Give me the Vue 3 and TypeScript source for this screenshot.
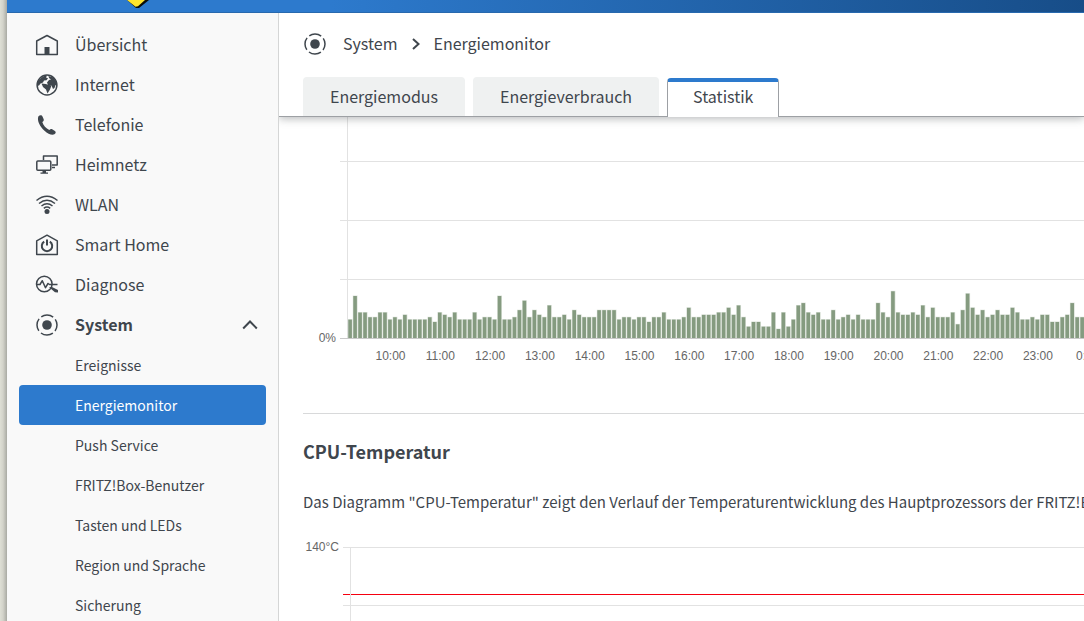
<script setup lang="ts">
interface NavItem {
  id: string
  label: string
}

const navItems: NavItem[] = [
  { id: 'home', label: 'Übersicht' },
  { id: 'globe', label: 'Internet' },
  { id: 'phone', label: 'Telefonie' },
  { id: 'network', label: 'Heimnetz' },
  { id: 'wifi', label: 'WLAN' },
  { id: 'smart', label: 'Smart Home' },
  { id: 'diagnose', label: 'Diagnose' },
]

const systemPages: string[] = [
  'Ereignisse',
  'Energiemonitor',
  'Push Service',
  'FRITZ!Box-Benutzer',
  'Tasten und LEDs',
  'Region und Sprache',
  'Sicherung',
]
const activePage = 'Energiemonitor'

const tabs: string[] = ['Energiemodus', 'Energieverbrauch', 'Statistik']
const activeTab = 'Statistik'

// CPU load in percent, one sample every six minutes
const load: number[] = [
  8, 18, 11, 11, 9, 9, 11, 11, 8, 9, 8, 10, 8, 8, 8, 8, 9, 7, 11, 10, 9, 11, 8, 8, 8, 11, 8, 9, 9, 8, 18,
  8, 8, 9, 12, 16, 9, 12, 10, 9, 14, 9, 9, 10, 8, 12, 10, 9, 9, 9, 12, 12, 12, 12, 8, 9, 9, 8, 9, 9, 7, 9, 9, 11,
  8, 8, 8, 9, 13, 9, 9, 10, 10, 10, 11, 11, 13, 10, 14, 9, 5, 7, 7, 5, 5, 11, 4, 11, 5, 8, 14, 15, 11, 10, 11,
  8, 8, 12, 8, 9, 10, 8, 10, 8, 8, 8, 15, 11, 9, 20, 11, 10, 10, 11, 10, 14, 9, 13, 9, 9, 9, 11, 6, 12, 19, 13,
  10, 12, 9, 10, 12, 10, 10, 13, 11, 8, 8, 9, 8, 10, 10, 7, 7, 9, 10, 15, 9, 9, 9, 10,
]

const hourWidth = 49.8
const baseline = 221
const bars = load.map((value, i) => {
  const height = value * 2.36
  return { x: 45.3 + (i * hourWidth) / 10, y: baseline - height, height }
})
const hours = Array.from({ length: 15 }, (_, i) => ({
  x: 87.5 + i * hourWidth,
  label: `${(10 + i) % 24}:00`,
}))
const gridLines: number[] = [44, 103, 162]
</script>

<template>
  <div class="desktop">
    <div class="page">
      <header class="topbar">
        <svg class="logo" width="30" height="9" viewBox="0 0 30 9" aria-hidden="true">
          <path d="M0 0H22L12 8H9z" fill="#0b0d08" />
          <path d="M0 0H18L11 6.300 8.500 6.800z" fill="#ffe52c" />
        </svg>
      </header>

      <div class="body">
        <nav class="sidebar" aria-label="Hauptmenü">
          <a v-for="item in navItems" :key="item.id" class="nav-item" href="#">
            <svg class="icon" width="24" height="24" viewBox="0 0 24 24" aria-hidden="true">
              <g v-if="item.id === 'home'">
                <path class="line" d="M1.700 21.500V8L12 2.500 22.300 8v13.500z" />
                <path class="solid" d="M9.500 14h5v7.500h-5z" />
              </g>
              <g v-else-if="item.id === 'globe'">
                <circle class="line" cx="12" cy="12" r="9.900" />
                <path class="solid" d="M3 8l3-3 3-2 3-.5-1 2 2 .8-1.500 2-2.500.3-1 2-2.500 1-1.500 2-2 .5z" />
                <path class="solid" d="M13.500 3l5 1.500 3 4.500.5 4-1.500-1-1 3-1.500 1-1.500-3.500-3.500-.5-1-2.500 2-2.500 2-.5-2-1.500z" />
                <path class="solid" d="M6.500 10.500l4 .5 6 1.500-1.500 4-2.500 4-1.500-4-3-2.500z" />
              </g>
              <path
                v-else-if="item.id === 'phone'"
                class="solid"
                d="M3.300 3.400C5 1.800 6.800 2 7.600 3.700l1.100 2.600c.4 1.200-.2 2-1.400 2.800 1 3.300 3.700 6.400 7 8 1-1 1.800-1.400 2.900-.8l2.700 1.600c1.300 1 1 2.400-.5 3.400-2.400 1.300-6.400-.4-9.900-3.600C5.200 14 1.800 7.600 3.300 3.400z"
              />
              <g v-else-if="item.id === 'network'">
                <path class="line" d="M8.500 7V3h13.700v9H17M17 14.500h3" />
                <rect class="line" x="1.800" y="8" width="14" height="9.200" rx="1" />
                <path class="solid" d="M7.500 17.500h3.500v2h2v1.200H5.500v-1.200h2z" />
              </g>
              <g v-else-if="item.id === 'wifi'">
                <path class="line" d="M1.500 7.500q10.500-8.500 21 0M4 10.500q8-6.500 16 0M6.500 13q5.500-4.500 11 0M8.800 15.400q3.200-2.600 6.400 0" />
                <circle class="solid" cx="12" cy="18.500" r="2.500" />
              </g>
              <g v-else-if="item.id === 'smart'">
                <path class="line" d="M1.700 21.500V7.800L12 2.200l10.300 5.600v13.700z" />
                <path class="line thick" d="M9.200 8.600a5.200 5.200 0 1 0 5.600 0M12 6.500v6" />
              </g>
              <g v-else>
                <circle class="line" cx="9.300" cy="11" r="7.800" />
                <path class="line" d="M2 11.500h3l2.300-3.800 3.200 7 2.500-4.200 1.500 1h8" />
                <path class="solid" d="M14 14.300l3-.3 6 3v2.500l-3-.3z" />
              </g>
            </svg>
            <span class="nav-label">{{ item.label }}</span>
          </a>

          <button class="nav-item nav-group" type="button" aria-expanded="true">
            <svg class="icon" width="24" height="24" viewBox="0 0 24 24" aria-hidden="true">
              <circle class="solid" cx="12" cy="12" r="4.800" />
              <circle class="line ring" cx="12" cy="12" r="10" />
            </svg>
            <span class="nav-label">System</span>
            <svg class="chevron" width="16" height="12" viewBox="0 0 16 12" aria-hidden="true">
              <path d="M1.200 9.500L8 2.500l6.800 7" />
            </svg>
          </button>

          <a
            v-for="page in systemPages"
            :key="page"
            class="sub-item"
            :class="{ active: page === activePage }"
            href="#"
          >{{ page }}</a>
        </nav>

        <main class="content">
          <div class="head">
            <div class="crumbs">
              <svg class="icon" width="24" height="24" viewBox="0 0 24 24" aria-hidden="true">
                <circle class="solid" cx="12" cy="12" r="4.800" />
                <circle class="line ring" cx="12" cy="12" r="10" />
              </svg>
              <a class="nav-label" href="#">System</a>
              <svg class="separator" width="8" height="12" viewBox="0 0 8 12" aria-hidden="true">
                <path d="M1 1l5.500 5L1 11" />
              </svg>
              <span class="nav-label">Energiemonitor</span>
            </div>
            <div class="tabs" role="tablist">
              <button
                v-for="tab in tabs"
                :key="tab"
                class="tab"
                :class="{ selected: tab === activeTab }"
                type="button"
                role="tab"
                :aria-selected="tab === activeTab"
              >{{ tab }}</button>
            </div>
          </div>

          <div class="scroll">
            <svg class="chart" height="296" role="img" aria-label="CPU-Auslastung">
              <line v-for="y in gridLines" :key="y" class="grid" x1="37" x2="100%" :y1="y + 0.5" :y2="y + 0.5" />
              <line class="grid" x1="44.5" x2="44.5" y1="0" y2="221" />
              <rect v-for="(bar, i) in bars" :key="i" class="halo" :x="bar.x - 0.5" :y="bar.y" width="4.800" :height="bar.height" />
              <rect v-for="(bar, i) in bars" :key="i" class="bar" :x="bar.x" :y="bar.y + 0.5" width="3.600" :height="bar.height" />
              <line class="axis" x1="37" x2="100%" y1="221.5" y2="221.5" />
              <text x="33" y="225" text-anchor="end">0%</text>
              <text v-for="hour in hours" :key="hour.x" :x="hour.x" y="243" text-anchor="middle">{{ hour.label }}</text>
            </svg>

            <section class="section">
              <h2>CPU-Temperatur</h2>
              <p>Das Diagramm "CPU-Temperatur" zeigt den Verlauf der Temperaturentwicklung des Hauptprozessors der FRITZ!Box.</p>
            </section>

            <svg class="chart" height="240" role="img" aria-label="CPU-Temperatur">
              <line class="grid" x1="40" x2="100%" y1="17.5" y2="17.5" />
              <line class="grid" x1="40" x2="100%" y1="75.5" y2="75.5" />
              <line class="limit" x1="40" x2="100%" y1="64.5" y2="64.5" />
              <line class="grid" x1="47.5" x2="47.5" y1="17" y2="240" />
              <text x="36" y="21" text-anchor="end">140°C</text>
            </svg>
          </div>
        </main>
      </div>
    </div>
  </div>
</template>

<style>
body {
  overflow: hidden;
}
</style>

<style scoped>
.desktop {
  box-sizing: border-box;
  height: 100vh;
  padding-left: 7px;
  overflow: hidden;
  background: linear-gradient(90deg, #dedfd5 0, #d3d3ca 3px, #a9aaa3 7px);
  color: #3f464d;
  font-family: "Noto Sans CJK SC", "Noto Sans", sans-serif;
  font-size: 16px;
}
.page {
  display: flex;
  flex-direction: column;
  height: 100%;
  background: #fff;
}
.topbar {
  box-sizing: border-box;
  flex: none;
  height: 13px;
  padding-left: 120px;
  border-bottom: 1px solid #2869ae;
  background: linear-gradient(90deg, #2d7acd 0, #2d7acd 30%, #174d88 100%);
}
.logo {
  display: block;
}
.body {
  display: flex;
  flex: 1;
  min-height: 0;
}
.sidebar {
  box-sizing: border-box;
  flex: none;
  width: 272px;
  padding: 12px;
  overflow: hidden;
  border-right: 1px solid #d5d6d6;
  background: #f9f9f9;
}
.nav-item {
  display: flex;
  align-items: center;
  gap: 16px;
  box-sizing: border-box;
  width: 100%;
  height: 40px;
  padding: 0 8px 0 16px;
  border: 0;
  background: none;
  color: inherit;
  font: inherit;
  text-decoration: none;
}
.nav-label {
  padding-bottom: 2px;
}
.nav-group {
  font-weight: 700;
}
.icon {
  flex: none;
}
.line {
  fill: none;
  stroke: #3f464d;
  stroke-width: 1.5;
  stroke-linejoin: round;
}
.ring {
  stroke-dasharray: 12.7 3;
  stroke-dashoffset: 6.35;
}
.thick {
  stroke-width: 2;
}
.solid {
  fill: #3f464d;
}
.chevron {
  margin-left: auto;
  fill: none;
  stroke: #3f464d;
  stroke-width: 2;
}
.sub-item {
  display: block;
  height: 40px;
  padding-left: 56px;
  border-radius: 4px;
  color: inherit;
  font-size: 14px;
  line-height: 40px;
  text-decoration: none;
}
.sub-item.active {
  background: #2d7acd;
  color: #fff;
}
.content {
  display: flex;
  flex: 1;
  flex-direction: column;
  min-width: 0;
}
.head {
  position: relative;
  flex: none;
  border-bottom: 1px solid #9da0a4;
  box-shadow: 0 2px 8px rgba(60, 65, 70, 0.35);
  background: #fff;
  clip-path: inset(0 0 -12px 0);
}
.crumbs {
  display: flex;
  align-items: center;
  box-sizing: border-box;
  height: 64px;
  padding: 0 24px 2px;
}
.crumbs a {
  margin-left: 16px;
  color: inherit;
  text-decoration: none;
}
.separator {
  margin: 0 13px 0 15px;
  fill: none;
  stroke: #3f464d;
  stroke-width: 2;
}
.tabs {
  display: flex;
  align-items: flex-end;
  gap: 8px;
  padding-left: 24px;
}
.tab {
  height: 39px;
  padding: 0 27px 2px;
  border: 0;
  border-radius: 4px 4px 0 0;
  background: #eff1f1;
  color: inherit;
  font: inherit;
}
.tab.selected {
  margin-bottom: -1px;
  padding: 0 25px 8px;
  border: 1px solid #9da0a4;
  border-top: 4px solid #2d7acd;
  border-bottom: 0;
  background: #fff;
}
.scroll {
  flex: 1;
  min-height: 0;
  overflow: hidden;
}
.chart {
  display: block;
  width: 100%;
  margin-left: 24px;
}
.chart text {
  fill: #666;
  font: 12px "Liberation Sans", Arial, sans-serif;
}
.grid {
  stroke: #e2e2e2;
}
.axis {
  stroke: #c9c9c9;
}
.bar {
  fill: #859b80;
}
.halo {
  fill: #dbe2d9;
}
.limit {
  stroke: #f5000f;
}
.section {
  margin-left: 24px;
  padding-top: 21px;
  border-top: 1px solid #d8d9da;
}
.section h2 {
  margin: 0;
  font-size: 18px;
  font-weight: 700;
  line-height: 32px;
}
.section p {
  margin: 21px 0 14px;
  font-size: 15px;
  line-height: 28px;
  white-space: nowrap;
}
</style>
